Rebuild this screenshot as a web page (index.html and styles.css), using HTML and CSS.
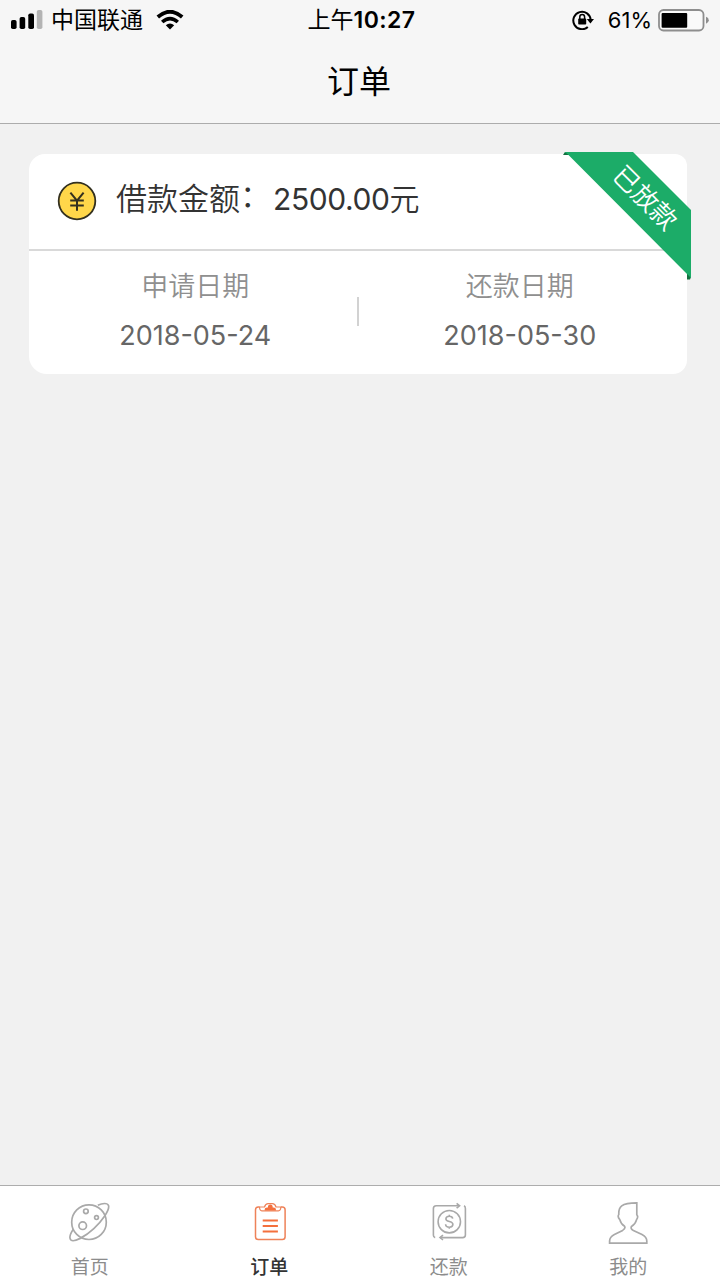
FILE: index.html
```html
<!DOCTYPE html>
<html lang="zh-CN">
<head>
    <meta charset="UTF-8">
    <meta name="viewport" content="width=device-width, initial-scale=1.0">
    <title>订单</title>
    <link rel="stylesheet" href="styles.css">
</head>
<body>
    <div class="app">
        <header class="header">
            <div class="status-bar">
                <div class="status-left">
                    <svg class="signal" width="32" height="20" viewBox="0 0 32 20">
                        <rect x="0" y="10" width="5.6" height="9" rx="1.8"/>
                        <rect x="8.6" y="7" width="5.6" height="12" rx="1.8"/>
                        <rect x="17.3" y="3.5" width="5.7" height="15.5" rx="1.8"/>
                        <rect x="25.8" y="0" width="5.6" height="19" rx="1.8" fill="#b4b4b4"/>
                    </svg>
                    <span class="carrier">中国联通</span>
                    <svg class="wifi" width="28" height="20" viewBox="0 0 28 20">
                        <path d="M1.8 7 Q14 -3.6 26.2 7" fill="none" stroke="#000" stroke-width="3.8"/>
                        <path d="M6.2 12 Q14 5.2 21.8 12" fill="none" stroke="#000" stroke-width="3.6"/>
                        <path d="M9.8 15.2 Q14 11.8 18.2 15.2 L14 19.6 Z"/>
                    </svg>
                </div>
                <div class="status-time">上午<span class="clock">10:27</span></div>
                <div class="status-right">
                    <svg class="lock" width="23" height="20" viewBox="0 0 23 20">
                        <path d="M15.8 17 A8.7 8.7 0 1 1 18.7 10" fill="none" stroke="#000" stroke-width="2"/>
                        <path d="M14.8 9 H22 L18.4 13.6 Z"/>
                        <rect x="6.2" y="8.6" width="8" height="6" rx="0.8"/>
                        <path d="M7.8 9 V7 A2.4 2.4 0 0 1 12.6 7 V9" fill="none" stroke="#000" stroke-width="1.5"/>
                    </svg>
                    <span class="percent">61%</span>
                    <svg class="battery" width="52" height="23" viewBox="0 0 52 23">
                        <rect x="1" y="1" width="44.5" height="20.5" rx="4.5" fill="#fafafa" stroke="#8e8e8e" stroke-width="1.8"/>
                        <rect x="3.6" y="4" width="25.6" height="14.8" rx="1"/>
                        <path d="M48 7.8 Q50.8 8.8 50.8 11.2 Q50.8 13.6 48 14.8 Z" fill="#8e8e8e"/>
                    </svg>
                </div>
            </div>
            <h1 class="title">订单</h1>
        </header>

        <main class="content">
            <div class="order-card">
                <div class="order-head">
                    <svg class="coin" width="40" height="40" viewBox="0 0 40 40">
                        <circle cx="20" cy="20" r="18.3" fill="#ffd74a" stroke="#33301f" stroke-width="1.8"/>
                        <path d="M13.4 11.6 L20 19.6 L26.6 11.6 M20 19.6 V29.8 M13.2 19.6 H26.8 M13.2 24.5 H26.8" fill="none" stroke="#33301f" stroke-width="2"/>
                    </svg>
                    <span class="order-label">借款金额</span><span class="order-colon">：</span>
                    <span class="order-amount">2500.00</span><span class="order-unit">元</span>
                </div>
                <div class="order-dates">
                    <div class="date-item">
                        <div class="date-label">申请日期</div>
                        <div class="date-value">2018-05-24</div>
                    </div>
                    <div class="date-line"></div>
                    <div class="date-item">
                        <div class="date-label">还款日期</div>
                        <div class="date-value">2018-05-30</div>
                    </div>
                </div>
                <!-- 状态角标 -->
                <div class="ribbon">
                    <svg width="128" height="128" viewBox="0 0 128 128">
                        <path d="M0 3 L2 0 L8 3 Z M124 121 L128 125 L127 127.5 L124 127.5 Z" fill="#12713f"/>
                        <path d="M1.5 0 H70 L128 58 V126 L5 2.5 Z" fill="#1cac68"/>
                    </svg>
                    <span class="ribbon-text">已放款</span>
                </div>
            </div>
        </main>

        <nav class="tab-bar">
            <div class="tab">
                <svg width="44" height="44" viewBox="0.5 0 44 44" fill="none" stroke="#a9a9a9" stroke-width="1.7">
                    <circle cx="21.5" cy="22.2" r="17.3"/>
                    <circle cx="18.4" cy="11.3" r="2.3"/>
                    <circle cx="29" cy="17.6" r="1.9"/>
                    <circle cx="15.2" cy="25.7" r="3.8"/>
                    <path d="M30.3 5.3 C35 3 40 2.7 41 5.5 C42.5 10 34.8 20.5 26.3 28.6 C17.5 36.8 6.5 42.6 3.6 40.2 C1.4 38.2 3 33.3 6 29"/>
                </svg>
                <span>首页</span>
            </div>
            <div class="tab active">
                <svg width="44" height="44" viewBox="-1.5 0 44 44" fill="none" stroke="#ee8259" stroke-width="1.5">
                    <path d="M11 7 H9.8 Q7 7 7 9.8 V36.8 Q7 39.6 9.8 39.6 H33.8 Q36.6 39.6 36.6 36.8 V9.8 Q36.6 7 33.8 7 H32.4"/>
                    <path d="M11 7 Q11.2 10.8 13.3 10.8 H30 Q32.1 10.8 32.4 7 H27.5 Q26.5 3.7 24 3.7 H19.6 Q17 3.7 16 7 Z" stroke-width="1.2"/>
                    <path d="M16.2 10.6 V9.2 Q16.2 7.5 18.5 7.4 H19.4 Q19.4 4.6 21.8 4.6 Q24.2 4.6 24.2 7.4 H25 Q27.4 7.5 27.4 9.2 V10.6 Z" fill="#f4703d" stroke="none"/>
                    <path d="M14.2 20.5 H29.4 M14.2 26 H29.4 M14.2 31.5 H29.4" stroke="#f4703d" stroke-width="1.8"/>
                </svg>
                <span>订单</span>
            </div>
            <div class="tab">
                <svg width="44" height="44" viewBox="-1 0 44 44" fill="none" stroke="#a9a9a9" stroke-width="1.6">
                    <path d="M7.2 37.6 Q5.4 37.2 5.4 35.2 V8.6 Q5.4 5.8 8.2 5.8 H31 M36 5.8 Q37.4 6.4 37.4 8.6 V35 Q37.4 37.6 34.6 37.6 H12"/>
                    <path d="M28.6 3.4 L31.6 5.8 L28.6 8.2 M15 35.2 L12 37.6 L15 40"/>
                    <circle cx="21.3" cy="21.7" r="11.2"/>
                    <path d="M24.7 18.7 C24.5 16.8 23.2 16.2 21.3 16.2 C19.2 16.2 17.9 17.3 17.9 18.9 C17.9 22.5 24.9 20.5 24.9 24.3 C24.9 26.1 23.4 27.2 21.4 27.2 C19.2 27.2 17.7 26.2 17.6 24.2 M21.3 14.8 V16.4 M21.3 27 V28.7"/>
                </svg>
                <span>还款</span>
            </div>
            <div class="tab">
                <svg width="44" height="44" viewBox="0 0 44 44" fill="none" stroke="#a9a9a9" stroke-width="1.7">
                    <path d="M30.8 2.8 V14.8 Q32.6 16.8 30.6 19.6 Q29.4 24.2 25.5 26.5 Q24.2 28.6 27.4 30.4 L36 34.4 Q40.8 36.8 40.8 41 V43.2 H3.6 V41 Q3.6 36.8 8.4 34.4 L16.6 30.4 Q19.8 28.4 18.6 26.3 Q15 24.2 13.8 19.6 Q11.2 16.8 12.8 14.4 C12.4 7 15 2.8 30.8 2.8 Z"/>
                </svg>
                <span>我的</span>
            </div>
        </nav>
    </div>
</body>
</html>
```
FILE: styles.css
```css
* {
    margin: 0;
    padding: 0;
    box-sizing: border-box;
}

body, html {
    height: 100%;
    overflow: hidden;
}

body {
    font-family: Inter, "Noto Sans CJK SC", sans-serif;
    background-color: #f1f1f1;
    color: #000;
}

svg {
    display: block;
    flex-shrink: 0;
}

.app {
    display: flex;
    flex-direction: column;
    height: 100%;
}

.header {
    height: 124px;
    background-color: #f6f6f6;
    border-bottom: 1px solid #acacac;
}

.status-bar {
    display: grid;
    grid-template-columns: 1fr auto 1fr;
    align-items: center;
    height: 40px;
    padding: 0 10px 0 11px;
    font-size: 23px;
    line-height: 40px;
}

.status-left, .status-right {
    display: flex;
    align-items: center;
}

.status-right {
    justify-content: flex-end;
}

.carrier {
    margin-left: 8px;
}

.wifi {
    margin-left: 13px;
}

.status-time {
    padding-left: 2px;
    font-weight: 400;
}

.clock {
    font-weight: 600;
    letter-spacing: 0.4px;
}

.percent {
    margin: 0 6px 0 13px;
    font-size: 22px;
}

.title {
    padding: 2px 2px 0 0;
    font-size: 32px;
    font-weight: 400;
    line-height: 80px;
    text-align: center;
}

.content {
    flex: 1;
    padding: 30px 33px 0 29px;
}

.order-card {
    position: relative;
    height: 220px;
    background-color: #fff;
    border-radius: 16px 12px 14px 18px;
}

.order-head {
    display: flex;
    align-items: center;
    height: 97px;
    padding: 0 28px 6px;
    border-bottom: 2px solid #d9d9d9;
    font-size: 30px;
    line-height: 40px;
    color: #333;
}

.coin {
    margin-top: 4px;
}

.order-label, .order-colon {
    font-size: 31px;
    font-weight: 350;
}

.order-label {
    margin-left: 19px;
}

.order-colon {
    margin-bottom: 5px;
}

.order-amount {
    margin-left: 2px;
    letter-spacing: -0.4px;
}

.order-unit {
    font-weight: 350;
}

.order-dates {
    display: flex;
    align-items: flex-start;
    padding: 0 6px 0 5px;
}

.date-item {
    flex: 1;
    padding-top: 16px;
    text-align: center;
}

.date-label {
    font-size: 27px;
    font-weight: 350;
    line-height: 40px;
    color: #8f8f8f;
}

.date-value {
    margin-top: 9px;
    font-size: 27px;
    line-height: 40px;
    color: #666;
}

.date-line {
    width: 2px;
    height: 29px;
    margin-top: 46px;
    background-color: #d2d2d2;
}

/* 角标浮在卡片右上角 */
.ribbon {
    position: absolute;
    top: -2px;
    right: -4px;
    width: 128px;
    height: 128px;
}

.ribbon-text {
    position: absolute;
    top: 26px;
    left: 42px;
    width: 80px;
    font-size: 26px;
    font-weight: 350;
    line-height: 40px;
    color: #fff;
    text-align: center;
    transform: rotate(45deg);
}

.tab-bar {
    display: flex;
    height: 95px;
    padding-right: 2px;
    background-color: #fff;
    border-top: 1px solid #adadad;
}

.tab {
    display: flex;
    flex: 1;
    flex-direction: column;
    align-items: center;
    padding-top: 14px;
    font-size: 19px;
    font-weight: 400;
    line-height: 30px;
    color: #8c8c8c;
}

.tab span {
    margin-top: 9px;
}

.tab.active {
    font-weight: 500;
    color: #333;
}
```
